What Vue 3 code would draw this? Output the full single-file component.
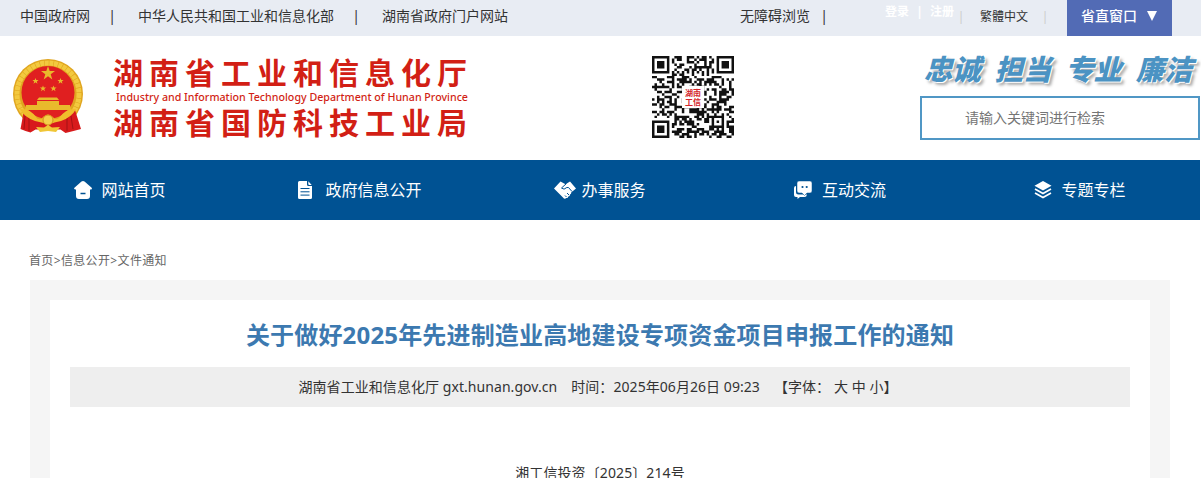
<script setup>
const links = ['中国政府网', '中华人民共和国工业和信息化部', '湖南省政府门户网站']
const slogans = ['忠诚', '担当', '专业', '廉洁']

const nav = [
  { name: '网站首页', icon: 'home' },
  { name: '政府信息公开', icon: 'doc' },
  { name: '办事服务', icon: 'hands' },
  { name: '互动交流', icon: 'chat' },
  { name: '专题专栏', icon: 'layers' },
]

// QR code modules
const size = 33
const finders = [[0, 0], [size - 7, 0], [0, size - 7]]

function ring(dx, dy, half) {
  const d = Math.max(Math.abs(dx), Math.abs(dy))
  return half === 3 ? d === 3 || d <= 1 : d === 2 || d === 0
}

function isDark(x, y) {
  for (const [fx, fy] of finders) {
    if (x >= fx - 1 && x <= fx + 7 && y >= fy - 1 && y <= fy + 7) {
      return ring(x - fx - 3, y - fy - 3, 3)
    }
  }
  if (Math.abs(x - 26) <= 2 && Math.abs(y - 26) <= 2) return ring(x - 26, y - 26, 2)
  if (x === 6 || y === 6) return (x + y) % 2 === 0
  let n = (x * 374761393 + y * 668265263 + 77) | 0
  n = Math.imul(n ^ (n >>> 13), 1274126177)
  return ((n ^ (n >>> 16)) & 255) < 130
}

let qrPath = ''
for (let y = 0; y < size; y++) {
  for (let x = 0; x < size; x++) {
    if (isDark(x, y)) qrPath += `M${x} ${y}h1v1h-1z`
  }
}
</script>

<template>
  <div class="page">
    <div class="topbar">
      <div class="links">
        <template v-for="(link, i) in links" :key="link">
          <span v-if="i" class="sep">|</span>
          <a>{{ link }}</a>
        </template>
      </div>
      <a>无障碍浏览</a>
      <span class="bar">|</span>
      <div class="login"><b>登录</b><b class="mid">|</b><b>注册</b></div>
      <span class="thin">|</span>
      <a class="trad">繁體中文</a>
      <span class="thin">|</span>
      <div class="window-btn">省直窗口<i></i></div>
    </div>

    <div class="header">
      <svg class="emblem" width="72" height="76" viewBox="0 0 72 76">
        <circle cx="36" cy="35" r="35" fill="#e0a51f" />
        <circle cx="36" cy="35" r="31" fill="none" stroke="#f3c93f" stroke-width="5" stroke-dasharray="4 .6" />
        <circle cx="36" cy="33.500" r="26.500" fill="#e01f20" />
        <path d="M12 51 8.500 70l5 2 5 1.500 5-3h25l5 3.500 8-2 7.500-2L63 51l-8 4-19 12-17-12z" fill="#d81a1c" />
        <path d="m13 57-1 13m5-11v13m42-15 2 13m-6-11v13" stroke="#a31215" fill="none" />
        <g fill="#e9b92c">
          <path d="m36 7 1.700 5h5.300l-4.300 3.200 1.600 5.200-4.300-3.200-4.300 3.200 1.600-5.200L29 12h5.300z" />
          <path id="star" d="m23.500 19 .8 2h2.300l-1.800 1.400.7 2.300-2-1.400-2 1.400.7-2.300-1.800-1.400h2.300z" />
          <use href="#star" x="25" /><use href="#star" x="7.500" y="7.500" /><use href="#star" x="18" y="7.500" />
          <path d="m25 41 2-2.500h18l2 2.500zM25 42h22v4h11l1 5H13l1-5h11z" />
        </g>
        <path d="M8 50q10-1 17 9 4 3 6-1 5-5 10 0 2 4 6 1 7-10 17-9-4 8-15 12l-13 3-13-3Q12 58 8 50z" fill="#f0bd2c" />
        <circle cx="36" cy="61" r="5" fill="#f4d04b" stroke="#d5901b" />
        <path d="m24 68 8 .500 4-2.500 4 2.500 8-.500-4 5-8-1-8 1z" fill="#f0c636" />
      </svg>
      <div class="logo">
        <div class="cn">湖南省工业和信息化厅</div>
        <svg class="en" width="356" height="16"><text x="3" y="12" textLength="352" lengthAdjust="spacingAndGlyphs">Industry and Information Technology Department of Hunan Province</text></svg>
        <div class="cn">湖南省国防科技工业局</div>
      </div>
      <div class="qr">
        <svg width="82" height="82" viewBox="0 0 33 33"><path :d="qrPath" fill="#111" /></svg>
        <div class="qr-logo"><span>湖南</span><span>工信</span></div>
      </div>
      <div class="right">
        <div class="slogan"><span v-for="s in slogans" :key="s">{{ s }}</span></div>
        <input class="search" placeholder="请输入关键词进行检索">
      </div>
    </div>

    <div class="nav">
      <a v-for="item in nav" :key="item.name" :class="item.icon">
        <svg v-if="item.icon === 'home'" width="18" height="18" viewBox="0 0 18 18">
          <path d="M9 0q.8 0 1.500.6l6.900 5.900c1 .9.600 2-.7 2H16v6.500q0 3-3 3H5q-3 0-3-3V8.500h-.7C0 8.500-.3 7.400.7 6.500L7.500.6Q8.200 0 9 0z" fill="#fff" />
          <path d="M6.500 12.500h5" stroke="#005293" stroke-width="1.500" />
        </svg>
        <svg v-else-if="item.icon === 'doc'" width="14" height="18" viewBox="0 0 14 18">
          <path d="M1.500 0H9v3.500Q9 5 10.500 5H14v11.500q0 1.500-1.500 1.500h-11Q0 18 0 16.500v-15Q0 0 1.500 0zM10.300.3 13.700 4h-2.400q-1 0-1-1z" fill="#fff" />
          <path d="M2.500 7.500h9m-9 3.300h9m-9 3.300h9" stroke="#005293" />
        </svg>
        <svg v-else-if="item.icon === 'hands'" width="22" height="19" viewBox="0 0 22 19">
          <path d="M6.500.5 0 7.500l9 9q1.700 2.300 3.300.5 1.700.2 2-1.500 1.800 0 1.700-2 1.500-.5 1.200-2L22 7.500 16 .5 11.500 3.200z" fill="#fff" />
          <path d="m12.500 2.500-5 4.500q2.500 2.500 5.300-.5h1.700l3.500 4M11 14.500l1.500 1.500M13 12l2 2" stroke="#005293" fill="none" />
        </svg>
        <svg v-else-if="item.icon === 'chat'" width="18" height="18" viewBox="0 0 18 18">
          <path d="M2 5v6q0 2.500 2.500 2.500H13Q12.500 16 10.500 16H6l-2.500 2v-2H2q-2 0-2-2V7q0-2 2-2z" fill="#fff" />
          <path d="M5 0h11q2 0 2 2v8q0 2-2 2h-3l-2.500 2.500L8 12H5q-2 0-2-2V2q0-2 2-2z" fill="#fff" stroke="#005293" stroke-width=".5" />
          <circle cx="8.500" cy="6" r="1.100" fill="#005293" /><circle cx="12.700" cy="6" r="1.100" fill="#005293" />
        </svg>
        <svg v-else width="18" height="18" viewBox="0 0 18 18">
          <path d="M9 0 17.500 4.800 9 9.600.5 4.800z" fill="#fff" />
          <path d="m1 8 8 4.500L17 8M1 12l8 4.500 8-4.500" fill="none" stroke="#fff" stroke-width="1.700" />
        </svg>
        <span>{{ item.name }}</span>
      </a>
    </div>

    <div class="crumbs">首页&gt;信息公开&gt;文件通知</div>
    <div class="wrap">
      <div class="article">
        <h1>关于做好2025年先进制造业高地建设专项资金项目申报工作的通知</h1>
        <div class="info">
          <span>湖南省工业和信息化厅 gxt.hunan.gov.cn</span>
          <span>时间：2025年06月26日 09:23</span>
          <span>【字体： 大 中 小】</span>
        </div>
        <p>湘工信投资〔2025〕214号</p>
      </div>
    </div>
  </div>
</template>

<style>
body {
  margin: 0;
  overflow: hidden;
}
</style>

<style scoped>
.page {
  height: 478px;
  overflow: hidden;
  background: #fff;
  color: #333;
  font: 14px/20px "Noto Sans", "Noto Sans CJK SC", sans-serif;
}
.topbar {
  display: flex;
  height: 36px;
  line-height: 32px;
  background: #e8ecf3;
  white-space: nowrap;
}
.links {
  display: flex;
  width: 720px;
  padding-left: 20px;
}
.sep {
  width: 44px;
  padding-right: 4px;
  text-align: center;
}
.bar {
  width: 28px;
  text-align: center;
}
.login {
  display: flex;
  width: 72px;
  margin-left: 47px;
  color: #fff;
  font-size: 12px;
  line-height: 23px;
}
.login .mid {
  width: 21px;
  text-align: center;
}
.thin {
  width: 8px;
  color: #ccc;
  font-size: 12px;
  line-height: 34px;
  text-align: center;
}
.trad {
  margin: 0 13px 0 15px;
  font-size: 12px;
  line-height: 34px;
}
.window-btn {
  display: flex;
  align-items: center;
  box-sizing: border-box;
  width: 105px;
  height: 36px;
  margin-left: 18px;
  padding: 0 0 4px 14px;
  background: #526bb5;
  color: #fff;
  font-weight: 500;
}
.window-btn i {
  margin-left: 10px;
  border: 5px solid transparent;
  border-top: 10px solid #fff;
  border-bottom: 0;
}
.header {
  display: flex;
  width: 1200px;
  height: 124px;
}
.emblem {
  margin: 23px 0 0 12px;
}
.logo {
  width: 539px;
  padding-top: 19px;
  margin-left: 29px;
  color: #d21f15;
}
.cn {
  height: 34px;
  line-height: 35px;
  font-size: 30px;
  font-weight: 700;
  letter-spacing: 6px;
}
.en {
  display: block;
  font-size: 11px;
  font-weight: 500;
  fill: #d21f15;
}
.qr {
  position: relative;
  width: 82px;
  margin-top: 20px;
}
.qr-logo {
  position: absolute;
  left: 30px;
  top: 30px;
  display: flex;
  flex-direction: column;
  align-items: center;
  justify-content: center;
  width: 22px;
  height: 22px;
  background: #fff;
  color: #d4252a;
  font-size: 8px;
  font-weight: 700;
  line-height: 9px;
}
.right {
  width: 280px;
  margin-left: 186px;
}
.slogan {
  display: flex;
  gap: 14px;
  height: 60px;
  padding-left: 4px;
  box-sizing: border-box;
  line-height: 66px;
  color: #4b93c3;
  font-size: 28.300px;
  font-weight: 900;
  font-style: italic;
  text-shadow: 1px 1px #fff, 3px 3px 3px #aaa;
  white-space: nowrap;
}
.search {
  display: block;
  box-sizing: border-box;
  width: 280px;
  height: 44px;
  padding: 0 0 2px 43px;
  border: 2px solid #5097c5;
  outline: 0;
  background: #fff;
  font: 14px "Noto Sans CJK SC", sans-serif;
}
.search::placeholder {
  color: #757575;
}
.nav {
  display: flex;
  width: 1200px;
  height: 60px;
  background: #005293;
  color: #fff;
  font-size: 16px;
}
.nav a {
  display: flex;
  align-items: center;
  justify-content: center;
  width: 240px;
}
.nav svg {
  margin-right: 9px;
}
.nav .doc svg {
  margin-right: 13px;
}
.nav .hands svg {
  margin-right: 5px;
}
.nav .chat svg {
  margin-right: 10px;
}
.crumbs {
  height: 60px;
  padding-left: 29px;
  padding-right: 1px;
  color: #666;
  font-size: 12px;
  line-height: 81px;
  letter-spacing: 0.35px;
}
.wrap {
  width: 1100px;
  height: 300px;
  margin-left: 30px;
  padding: 20px 20px 0;
  background: #f5f5f5;
}
.article {
  height: 300px;
  padding: 0 20px;
  background: #fff;
  text-align: center;
}
h1 {
  height: 67px;
  margin: 0;
  color: #3c79b0;
  font-size: 24px;
  line-height: 69px;
  letter-spacing: 0.17px;
}
.info {
  display: flex;
  justify-content: center;
  gap: 14px;
  height: 40px;
  padding-right: 4px;
  line-height: 40px;
  letter-spacing: 0.06px;
  background: #eee;
}
.article p {
  margin: 56px 0 0;
  letter-spacing: 0.1px;
}
</style>
